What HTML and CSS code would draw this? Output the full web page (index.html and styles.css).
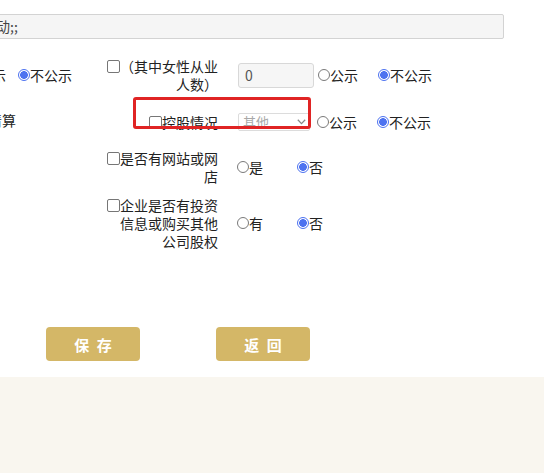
FILE: index.html
```html
<!DOCTYPE html>
<html lang="zh-CN">
<head>
<meta charset="utf-8">
<title>表单</title>
<link rel="stylesheet" href="styles.css">
</head>
<body>
<div class="content">
  <div class="textbox"><span class="tb-text">动;;</span></div>

  <div class="form">
    <div class="row row1">
      <div class="cell-a a1"><span class="cut">示</span><span class="radio checked"></span>不公示</div>
      <div class="cell-b"><span class="cb"></span>（其中女性从业人数）</div>
      <div class="cell-c cell-c-wide">
        <div class="input">0</div>
        <div class="opts opts-after">
          <span class="opt"><span class="radio"></span>公示</span><span class="opt"><span class="radio checked"></span>不公示</span>
        </div>
      </div>
    </div>

    <div class="row row2">
      <div class="cell-a a2">清算</div>
      <div class="cell-b"><span class="cb"></span>控股情况</div>
      <div class="cell-c cell-c-wide">
        <div class="select"><span>其他</span>
          <svg class="chev" width="9" height="6" viewBox="0 0 9 6"><path d="M0.8 0.8 L4.5 4.6 L8.2 0.8" fill="none" stroke="#888" stroke-width="1.3"/></svg>
        </div>
        <div class="opts opts-after2">
          <span class="opt"><span class="radio"></span>公示</span><span class="opt"><span class="radio checked"></span>不公示</span>
        </div>
      </div>
      <div class="mark"></div>
    </div>

    <div class="row row3">
      <div class="cell-a"></div>
      <div class="cell-b"><span class="cb"></span>是否有网站或网店</div>
      <div class="cell-c">
        <div class="opts">
          <span class="opt"><span class="radio"></span>是</span><span class="opt"><span class="radio checked"></span>否</span>
        </div>
      </div>
    </div>

    <div class="row row4">
      <div class="cell-a"></div>
      <div class="cell-b"><span class="cb"></span>企业是否有投资信息或购买其他公司股权</div>
      <div class="cell-c">
        <div class="opts">
          <span class="opt"><span class="radio"></span>有</span><span class="opt"><span class="radio checked"></span>否</span>
        </div>
      </div>
    </div>
  </div>

  <div class="buttons">
    <button class="btn" type="button">保 存</button>
    <button class="btn" type="button">返 回</button>
  </div>
</div>
<div class="footer"></div>
</body>
</html>
```
FILE: styles.css
```css
html, body {
  margin: 0;
  padding: 0;
  height: 100%;
}
body {
  background: #f9f6ef;
  font-family: "Noto Sans CJK SC", "Microsoft YaHei", sans-serif;
  font-size: 14px;
  color: #222;
  overflow: hidden;
}
.content {
  background: #fff;
  height: 377px;
  padding-top: 14px;
  box-sizing: border-box;
}
.textbox {
  margin-left: -4px;
  width: 508px;
  height: 25px;
  box-sizing: border-box;
  border: 1px solid #d3d3d3;
  border-radius: 2px;
  background: #f5f5f5;
  line-height: 23px;
  color: #444;
  overflow: hidden;
  white-space: nowrap;
}
.tb-text {
  display: inline-block;
  margin-left: -1px;
}
.form {
  position: relative;
  margin-top: 17px;
}
.row {
  display: flex;
  align-items: center;
  position: relative;
}
.row1 { height: 38px; }
.row2 { height: 55px; }
.row3 { height: 36px; }
.row4 { height: 75px; }

.cell-a {
  width: 107px;
  flex: none;
  white-space: nowrap;
  display: flex;
  align-items: center;
}
.a1 { margin-left: -8px; width: 115px; }
.a2 { margin-left: -12px; width: 119px; margin-top: -3px; }
.cut { margin-right: 12px; }

.cell-b {
  width: 111px;
  flex: none;
  text-align: right;
  line-height: 18px;
}
.cell-c {
  display: flex;
  align-items: center;
  padding-left: 19px;
}
.cell-c-wide { padding-left: 20px; }
.cb {
  display: inline-block;
  width: 11px;
  height: 11px;
  border: 1px solid #767676;
  border-radius: 2px;
  box-sizing: content-box;
  margin-right: 0;
  vertical-align: -1px;
  background: #fff;
}
.radio {
  display: inline-block;
  width: 10px;
  height: 10px;
  border: 1px solid #7a7a7a;
  border-radius: 50%;
  vertical-align: -1px;
  flex: none;
  background: #fff;
}
.radio.checked {
  border-color: #4d72f0;
  background: radial-gradient(circle, #4d72f0 0 3.6px, #fff 4.1px);
}
.cell-a .radio { margin-right: 0; }
.opts {
  display: flex;
  align-items: center;
}
.opt {
  width: 60px;
  display: flex;
  align-items: center;
  white-space: nowrap;
}
.opt .radio { margin-right: 0; }
.opts-after { margin-left: 4px; }
.opts-after2 { margin-left: 7px; }

.input {
  width: 76px;
  height: 25px;
  box-sizing: border-box;
  border: 1px solid #d8d8d8;
  border-radius: 3px;
  background: #f6f6f6;
  color: #555;
  padding-left: 6px;
  line-height: 23px;
}
.select {
  width: 72px;
  height: 18px;
  box-sizing: border-box;
  border: 1px solid #dcdcdc;
  border-radius: 2px;
  background: #fff;
  color: #a8a8a8;
  font-size: 13px;
  line-height: 16px;
  padding-left: 4px;
  display: flex;
  align-items: center;
  justify-content: space-between;
  padding-right: 3px;
}
.chev { flex: none; }
.mark {
  position: absolute;
  left: 133px;
  top: 3px;
  width: 178px;
  height: 32px;
  box-sizing: border-box;
  border: 3px solid #e02424;
  border-radius: 3px;
  pointer-events: none;
}
.buttons {
  display: flex;
  gap: 76px;
  padding-left: 46px;
  margin-top: 67px;
}
.btn {
  width: 94px;
  height: 34px;
  border: none;
  border-radius: 4px;
  background: #d4b767;
  color: #fff;
  font-family: "Noto Sans CJK SC", "Microsoft YaHei", sans-serif;
  font-size: 15px;
  font-weight: bold;
  letter-spacing: 2px;
  padding: 0 0 0 2px;
}
.footer {
  height: 96px;
}
```
